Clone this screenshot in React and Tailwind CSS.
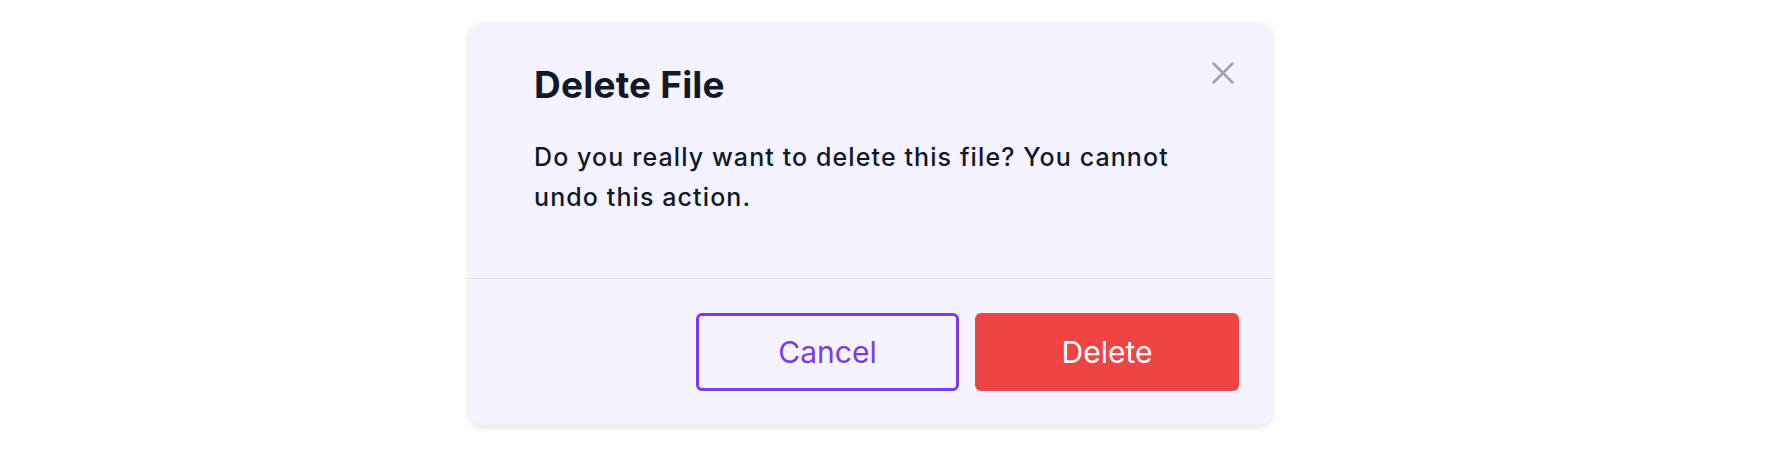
import React from 'react'

function CloseIcon() {
  return (
    <svg width="22" height="22" viewBox="0 0 22 22" fill="none" stroke="currentColor" strokeWidth="2.5" strokeLinecap="round">
      <path d="M1.5 1.5L20.5 20.5M20.5 1.5L1.5 20.5" />
    </svg>
  )
}

export default function App() {
  return (
    <div className="min-h-screen bg-white pt-[23px] pl-[469px]" style={{ fontFamily: 'Inter, "Noto Sans", sans-serif' }}>
      <div className="relative w-[803px] rounded-xl bg-[#f5f3ff] shadow-[0_2px_6px_rgba(0,0,0,0.12)]">
        <div className="px-[65px] pt-[42px] pb-[61px]">
          <h2 className="text-[37px] leading-[40px] font-bold tracking-[0.2px] text-[#111827]">Delete File</h2>
          <p className="mt-8 text-[25px] leading-[40px] font-medium tracking-[1.1px] text-[#111827]">
            Do you really want to delete this file? You cannot undo this action.
          </p>
        </div>
        <button className="absolute right-[38px] top-[39px] text-[#9ca3af]">
          <CloseIcon />
        </button>
        <div className="flex justify-end gap-4 border-t border-[#e2dfee] px-[33px] py-[34px]">
          <button className="flex h-[78px] w-[263px] items-center justify-center rounded-md border-[3px] border-[#7c3aed] text-[30px] font-normal text-[#7c3aed]">
            Cancel
          </button>
          <button className="flex h-[78px] w-[264px] items-center justify-center rounded-md bg-[#ef4444] text-[30px] font-normal text-white">
            Delete
          </button>
        </div>
      </div>
    </div>
  )
}
